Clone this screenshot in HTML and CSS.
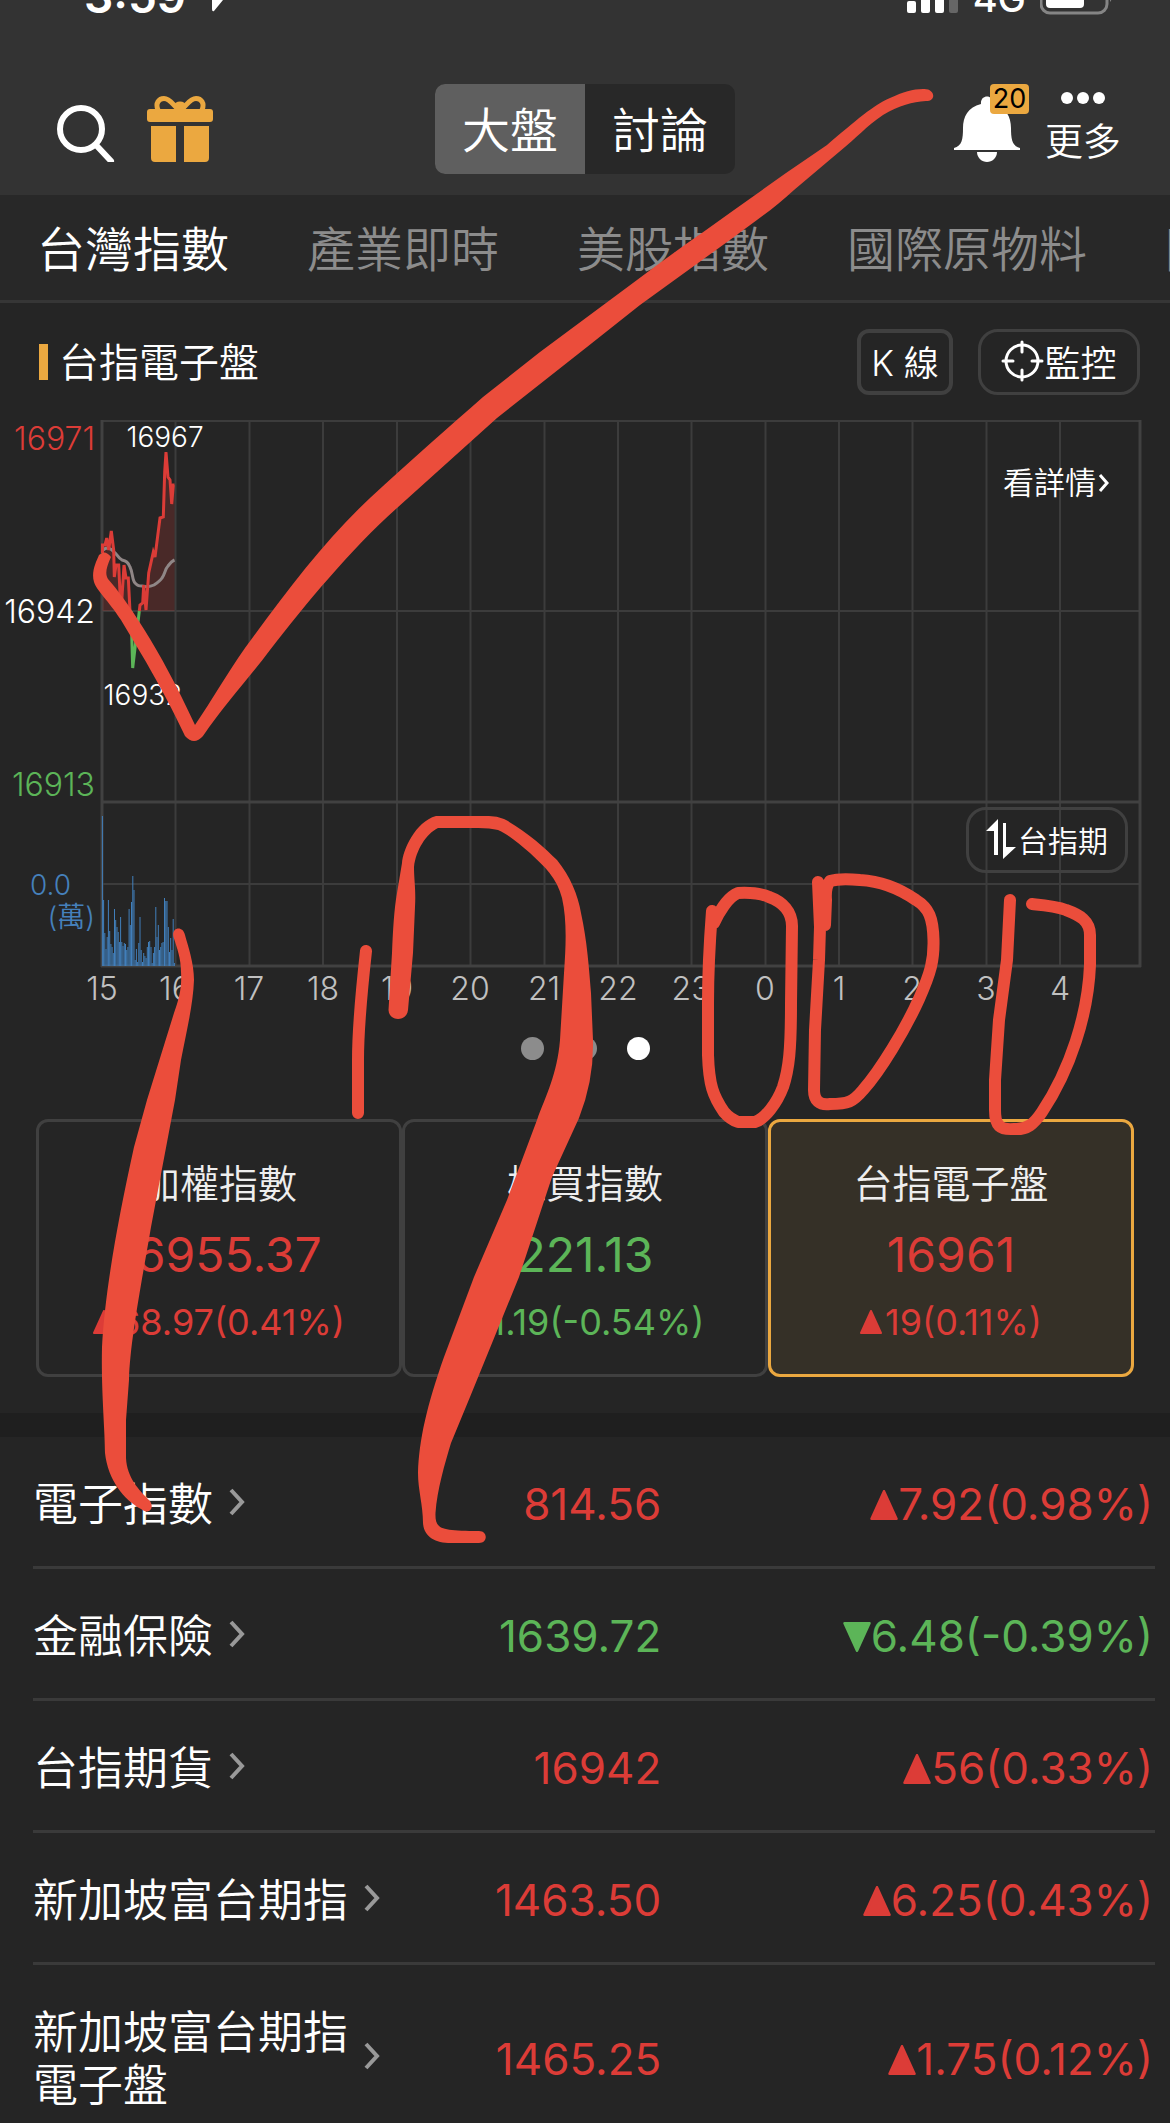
FILE: index.html
```html
<!DOCTYPE html>
<html lang="zh-Hant">
<head>
    <meta charset="UTF-8">
    <meta name="viewport" content="width=device-width, initial-scale=1.0">
    <title>大盤</title>
    <link rel="stylesheet" href="styles.css">
</head>
<body>
    <div class="screen">
        <header class="header">
            <div class="status-bar">
                <div class="status-left">
                    <span class="clock">3:59</span>
                    <svg class="location" width="14" height="19" viewBox="0 0 14 19"><path d="M0 0H13L4 11Q2 12 2 9V0Z" fill="#fff"/></svg>
                </div>
                <div class="status-right">
                    <svg width="52" height="19" viewBox="0 0 52 19" fill="#fff">
                        <rect x="0" y="1" width="9" height="12" rx="2"/>
                        <rect x="14" y="-6" width="9" height="19" rx="2"/>
                        <rect x="28" y="-12" width="9" height="25" rx="2"/>
                        <rect x="42" y="-18" width="9" height="31" rx="2" fill="#666"/>
                    </svg>
                    <span class="network">4G</span>
                    <svg width="74" height="19" viewBox="0 0 74 19">
                        <rect x="1" y="-20" width="66" height="33" rx="9" fill="none" stroke="#858585" stroke-width="3"/>
                        <rect x="6" y="-16" width="38" height="24" rx="4" fill="#fff"/>
                        <path d="M70 -6Q74 -3 70 2Z" fill="#858585"/>
                    </svg>
                </div>
            </div>
            <div class="toolbar">
                <div class="toolbar-left">
                    <button class="icon-button" type="button" aria-label="搜尋">
                        <svg width="58" height="66" viewBox="0 0 58 66" fill="none" stroke="#fff" stroke-width="6" stroke-linecap="round">
                            <ellipse cx="24" cy="33" rx="21" ry="21"/>
                            <path d="M39 49L54 65"/>
                        </svg>
                    </button>
                    <button class="icon-button" type="button" aria-label="禮物">
                        <svg width="66" height="66" viewBox="0 0 66 66" fill="#eba840">
                            <path d="M11 14C8 7 12 2.500 17 2.500C23 2.500 26 9 31 13M55 14C58 7 54 2.500 49 2.500C43 2.500 40 9 35 13" fill="none" stroke="#eba840" stroke-width="5"/>
                            <ellipse cx="33" cy="10" rx="6" ry="4.500"/>
                            <rect x="0" y="13" width="66" height="13" rx="3"/>
                            <path d="M4 30H29V66H8Q4 66 4 62ZM37 30H62V62Q62 66 58 66H37Z"/>
                        </svg>
                    </button>
                </div>
                <div class="segmented">
                    <button class="segment segment-active" type="button">大盤</button>
                    <button class="segment" type="button">討論</button>
                </div>
                <div class="toolbar-right">
                    <button class="icon-button bell" type="button" aria-label="通知">
                        <svg width="66" height="66" viewBox="0 0 66 66" fill="#fff">
                            <path d="M27 8C26 -2 40 -2 39 8C52 11 57 21 57 32C57 43 58 50 66 52V54H0V52C8 50 9 43 9 32C9 21 14 11 27 8Z"/>
                            <path d="M23 56H43C43 62 38 66 33 66C28 66 23 62 23 56Z"/>
                        </svg>
                        <span class="badge">20</span>
                    </button>
                    <button class="more" type="button">
                        <svg width="46" height="14" viewBox="0 0 46 14" fill="#fff"><circle cx="7" cy="6" r="6"/><circle cx="23" cy="6" r="6"/><circle cx="39" cy="6" r="6"/></svg>
                        <span>更多</span>
                    </button>
                </div>
            </div>
        </header>

        <nav class="tabs">
            <a class="tab tab-active" href="#">台灣指數</a>
            <a class="tab" href="#">產業即時</a>
            <a class="tab" href="#">美股指數</a>
            <a class="tab" href="#">國際原物料</a>
            <a class="tab" href="#">國際匯率</a>
        </nav>

        <main>
            <section class="index-panel">
                <div class="panel-head">
                    <h1 class="panel-title"><span>台指電子盤</span></h1>
                    <button class="outline-button k-line" type="button">K 線</button>
                    <button class="outline-button monitor" type="button">
                        <svg width="43" height="42" viewBox="0 0 43 42" fill="none" stroke="#fff" stroke-width="3" stroke-linecap="round">
                            <circle cx="21" cy="21" r="16"/>
                            <path d="M21 2V12M21 30V40M2 21H12M31 21H41"/>
                        </svg>
                        監控
                    </button>
                </div>

                <figure class="chart">
                    <svg class="chart-svg" viewBox="0 395 1170 625">
                        <!-- grid -->
                        <path class="grid" d="M175.500 421V966M249.500 421V966M323 421V966M397 421V966M470.500 421V966M544.500 421V966M618 421V966M691.500 421V966M765.500 421V966M839 421V966M912.500 421V966M986.500 421V966M1060 421V966M102 421H1140M102 611H1140M102 884H1140"/>
                        <path class="frame" d="M102 420V967M1140 420V967M102 802H1140M101 966H1141"/>

                        <!-- volume, one bar per minute -->
                        <path class="volume" d="M102.400 966V816M103.600 966V900M104.800 966V933M106 966V949M107.200 966V937M108.400 966V900M109.700 966V931M110.900 966V944M112.100 966V947M113.300 966V953M114.500 966V909M115.700 966V920M117 966V927M118.200 966V932M119.400 966V942M120.600 966V917M121.800 966V942M123 966V946M124.300 966V943M125.500 966V944M126.700 966V950M127.900 966V947M129.100 966V909M130.300 966V925M131.500 966V902M132.800 966V876M134 966V890M135.200 966V960M136.400 966V949M137.600 966V962M138.800 966V943M140 966V917M141.200 966V950M142.500 966V962M143.700 966V953M144.900 966V956M146.100 966V958M147.300 966V947M148.500 966V942M149.700 966V941M151 966V947M152.200 966V963M153.400 966V953M154.600 966V947M155.800 966V907M157 966V937M158.300 966V925M159.500 966V950M160.700 966V947M161.900 966V943M163.100 966V942M164.500 966V898M165.800 966V901M167 966V901M168.300 966V927M169.500 966V952M170.700 966V938M172 966V950M173.200 966V919M174.400 966V963"/>

                        <!-- price -->
                        <path class="area" d="M102.500 611V545L106.700 538L108.700 550L111.300 531L113.700 550L114.300 577L116 565H118.700L120 593L122 597L124 565L126 578H128.300L130 611ZM139.300 611L140 605L142.700 603L143.700 585L146 610L148.700 573L153.300 552L155 557L160 518L163.300 517L164.700 472L166 452L168 477L170 480L171.700 504L173.300 485H174.500V611Z"/>
                        <path class="average" d="M103 550C108 546 111 549 114 552C117 554 118 558 122 560C126 561 128 562 130 567C133 573 132 580 135 583C138 586 139 586 142 586C146 587 150 587 154 585C157 583 160 581 162 578C165 574 165 569 168 566C171 562 172 561 174.500 560"/>
                        <path class="line-up" d="M102.500 553V545H105L106.700 538L108.700 550L111.300 531L113.700 550L114.300 577L116 565H118.700L120 593L122 597L124 565L126 578H128.300L130 611M139.300 611L140 605L142.700 603L143.700 585L146 610L148.700 573L153.300 552L155 557L160 518L163.300 517L164.700 472L166 452L168 477L170 480L171.700 504L173.300 485H174.500"/>
                        <path class="line-down" d="M131 611L132.700 668L139.300 611"/>

                        <g class="price-labels">
                            <text class="up" x="95" y="450">16971</text>
                            <text x="95" y="623">16942</text>
                            <text class="down" x="95" y="796">16913</text>
                        </g>
                        <g class="volume-labels">
                            <text x="71" y="895">0.0</text>
                            <text x="95" y="927">(萬)</text>
                        </g>
                        <g class="peak-labels">
                            <text x="165" y="447">16967</text>
                            <text x="143" y="705">16932</text>
                        </g>
                        <g class="time-labels">
                            <text x="102" y="1000">15</text>
                            <text x="175" y="1000">16</text>
                            <text x="249" y="1000">17</text>
                            <text x="323" y="1000">18</text>
                            <text x="397" y="1000">19</text>
                            <text x="470" y="1000">20</text>
                            <text x="544" y="1000">21</text>
                            <text x="618" y="1000">22</text>
                            <text x="691" y="1000">23</text>
                            <text x="765" y="1000">0</text>
                            <text x="839" y="1000">1</text>
                            <text x="912" y="1000">2</text>
                            <text x="986" y="1000">3</text>
                            <text x="1060" y="1000">4</text>
                        </g>
                    </svg>
                    <a class="detail-link" href="#">
                        看詳情
                        <svg width="12" height="20" viewBox="0 0 12 20" fill="none" stroke="#fff" stroke-width="3"><path d="M2 2L9 10L2 18"/></svg>
                    </a>
                    <button class="outline-button contract" type="button">
                        <svg width="30" height="40" viewBox="0 0 30 40" fill="#fff"><path d="M12 0V36H8V12H0ZM17 4H20V28H30L17 40Z"/></svg>
                        台指期
                    </button>
                </figure>

                <div class="dots">
                    <button class="dot" type="button" aria-label="1"></button>
                    <button class="dot" type="button" aria-label="2"></button>
                    <button class="dot dot-active" type="button" aria-label="3"></button>
                </div>

                <div class="cards">
                    <button class="card" type="button">
                        <span class="card-name">加權指數</span>
                        <span class="card-price up">16955.37</span>
                        <span class="card-change up"><svg class="arrow" viewBox="0 0 22 24"><path d="M11 1L21 23H1Z"/></svg>68.97(0.41%)</span>
                    </button>
                    <button class="card" type="button">
                        <span class="card-name">櫃買指數</span>
                        <span class="card-price down">221.13</span>
                        <span class="card-change down"><svg class="arrow" viewBox="0 0 22 24"><path d="M11 23L21 1H1Z"/></svg>1.19(-0.54%)</span>
                    </button>
                    <button class="card card-active" type="button">
                        <span class="card-name">台指電子盤</span>
                        <span class="card-price up">16961</span>
                        <span class="card-change up"><svg class="arrow" viewBox="0 0 22 24"><path d="M11 1L21 23H1Z"/></svg>19(0.11%)</span>
                    </button>
                </div>
            </section>

            <section class="quotes">
                <table class="quote-table">
                    <tr>
                        <th class="name" scope="row"><a href="#"><span>電子指數</span><svg class="chevron" viewBox="0 0 16 28"><path d="M2 2L13 14L2 26"/></svg></a></th>
                        <td class="price up">814.56</td>
                        <td class="change up"><svg class="arrow" viewBox="0 0 22 24"><path d="M11 1L21 23H1Z"/></svg>7.92(0.98%)</td>
                    </tr>
                    <tr>
                        <th class="name" scope="row"><a href="#"><span>金融保險</span><svg class="chevron" viewBox="0 0 16 28"><path d="M2 2L13 14L2 26"/></svg></a></th>
                        <td class="price down">1639.72</td>
                        <td class="change down"><svg class="arrow" viewBox="0 0 22 24"><path d="M11 23L21 1H1Z"/></svg>6.48(-0.39%)</td>
                    </tr>
                    <tr>
                        <th class="name" scope="row"><a href="#"><span>台指期貨</span><svg class="chevron" viewBox="0 0 16 28"><path d="M2 2L13 14L2 26"/></svg></a></th>
                        <td class="price up">16942</td>
                        <td class="change up"><svg class="arrow" viewBox="0 0 22 24"><path d="M11 1L21 23H1Z"/></svg>56(0.33%)</td>
                    </tr>
                    <tr>
                        <th class="name" scope="row"><a href="#"><span>新加坡富台期指</span><svg class="chevron" viewBox="0 0 16 28"><path d="M2 2L13 14L2 26"/></svg></a></th>
                        <td class="price up">1463.50</td>
                        <td class="change up"><svg class="arrow" viewBox="0 0 22 24"><path d="M11 1L21 23H1Z"/></svg>6.25(0.43%)</td>
                    </tr>
                    <tr>
                        <th class="name" scope="row"><a href="#"><span>新加坡富台期指電子盤</span><svg class="chevron" viewBox="0 0 16 28"><path d="M2 2L13 14L2 26"/></svg></a></th>
                        <td class="price up">1465.25</td>
                        <td class="change up"><svg class="arrow" viewBox="0 0 22 24"><path d="M11 1L21 23H1Z"/></svg>1.75(0.12%)</td>
                    </tr>
                </table>
            </section>
        </main>

        <!-- marker drawing over the page: a tick and the number 17000 -->
        <svg class="marker" viewBox="0 0 1170 2123" aria-hidden="true">
            <path d="M99 555Q105 549 111 557C106 568 105 574 108 579C125 598 160 648 195 725C212 700 226 675 245 648C285 593 325 540 370 498C410 461 450 426 483 397L540 352L637 280C670 255 702 233 734 210L786 173L827 145C855 121 875 104 890 98C903 92 913 89 923 89C935 88 937 101 926 101C912 102 900 105 883 115C865 127 858 137 839 152L794 190C775 208 755 221 734 237L640 305L587 347L497 418L397 508C350 550 305 605 270 650C250 677 224 705 203 736Q194 746 185 736C160 683 140 652 121 620C108 600 97 591 94 582C91 572 96 562 99 555Z"/>
            <path d="M173.500 937C171 927 183 925 185 935C188 946 194 963 194 980C193 1005 187 1029 181 1060L175 1100L151 1227C143 1275 130 1340 129 1380L126 1420V1458C127 1478 139 1490 150 1501C155 1509 148 1515 141 1509C124 1500 108 1480 105 1453C105 1430 101 1390 102 1347C105 1290 118 1220 134 1147L147 1100L174 1013C179 999 182 988 181 972C181 958 177 948 173.500 937Z"/>
            <path d="M388.500 1010L392 953C393 930 394 910 397 893L402 863C403 850 415 822 436 816H489Q497 816 504 819C525 830 545 848 557 860C570 876 578 895 581 913C587 940 589 968 591 993L593 1040Q594 1080 579 1118L552 1177L519 1277L470 1397L451 1443C445 1463 437 1490 435.500 1513C435 1529 440 1531 479 1531C488 1531 488 1543 479 1543H451C435 1543 424 1537 423 1523C423 1505 418 1490 418 1473C419 1440 427 1405 444 1357L474 1277L507 1200L537 1120C546 1095 557 1075 560 1040L564 973C566 945 567 920 562 898C557 878 545 867 530 853C520 845 511 836 498 830Q490 828 478 828H438C426 834 416 850 414 867C414 880 416 890 415 907L413 953L408 1010C407 1022 389 1022 388.500 1010Z"/>
            <g class="marker-line">
                <path d="M366 951C360 1005 358 1035 358 1060V1113"/>
                <path d="M712 911C709 950 708 975 708 1003V1055C709 1085 713 1096 724 1112Q730 1119 738 1122H755C765 1119 777 1103 783 1087C789 1069 791 1050 791 1003L792 926C792 912 783 902 769 897Q758 892 738 893C728 897 719 912 714 923"/>
                <path d="M818 882L820 927L819 960L815 1030L814 1090Q814 1106 830 1104C848 1104 853 1102 863 1090C880 1071 905 1030 919 999C931 972 934 960 933.500 940C933 918 929 908 916 900C900 889 880 881 860 880Q840 878 830 881Q825 887 826 900L825 925"/>
                <path d="M1010 900L1007 960L999 1020L995 1080V1110C995 1126 1000 1130 1014 1129C1027 1130 1034 1124 1042 1112C1070 1070 1088 1015 1090 965V935C1090 921 1080 915 1066 910C1056 906 1043 905 1032 904"/>
            </g>
        </svg>
    </div>
</body>
</html>
```

FILE: styles.css
```css
* {
    box-sizing: border-box;
}

body {
    font-family: Inter, "Noto Sans CJK TC", sans-serif;
    font-weight: 350;
    background-color: #252525;
    color: #fff;
    margin: 0;
}

button {
    font: inherit;
    color: inherit;
    background: none;
    border: none;
    padding: 0;
    cursor: pointer;
}

a {
    color: inherit;
    text-decoration: none;
}

svg {
    display: block;
    flex-shrink: 0;
}

.screen {
    position: relative;
    height: 100vh;
    overflow: hidden;
}

.up {
    color: #dc3c37;
    fill: #dc3c37;
}

.down {
    color: #5cb558;
    fill: #5cb558;
}

/* header */
.header {
    background-color: #333;
}

.status-bar {
    display: flex;
    justify-content: space-between;
    align-items: flex-end;
    height: 19px;
    padding: 0 56px 0 84px;
    overflow: hidden;
}

.status-left,
.status-right {
    display: flex;
    align-items: flex-end;
}

.status-left {
    gap: 24px;
}

.status-right {
    gap: 14px;
}

.clock {
    font-size: 46px;
    font-weight: 600;
    line-height: 46px;
}

.network {
    font-size: 38px;
    font-weight: 500;
    line-height: 42px;
}

.toolbar {
    display: grid;
    grid-template-columns: 1fr auto 1fr;
    align-items: center;
    height: 176px;
    padding: 44px 49px 0;
}

.toolbar-left {
    display: flex;
    gap: 32px;
    padding-left: 8px;
}

.toolbar-right {
    display: flex;
    align-items: center;
    justify-content: flex-end;
    gap: 25px;
}

.segmented {
    display: flex;
    background-color: #282828;
    border-radius: 10px;
    overflow: hidden;
}

.segment {
    width: 150px;
    height: 90px;
    padding-bottom: 4px;
    font-size: 48px;
}

.segment-active {
    background-color: #5f5f5f;
}

.bell {
    position: relative;
}

.badge {
    position: absolute;
    top: -12px;
    right: -9px;
    width: 39px;
    height: 30px;
    border-radius: 4px;
    background-color: #eba840;
    color: #000;
    font-size: 27px;
    font-weight: 400;
    line-height: 30px;
}

.more {
    display: flex;
    flex-direction: column;
    align-items: center;
    gap: 12px;
    padding-bottom: 2px;
    font-size: 38px;
    line-height: 46px;
}

/* tabs */
.tabs {
    display: flex;
    align-items: center;
    gap: 78px;
    height: 108px;
    padding: 0 0 4px 37px;
    background-color: #282828;
    border-bottom: 3px solid #363636;
    overflow: hidden;
}

.tab {
    flex-shrink: 0;
    font-size: 48px;
    color: #8c8c8c;
}

.tab-active {
    color: #fff;
}

/* index panel */
.index-panel {
    padding: 26px 0 36px;
    border-bottom: 24px solid #1f1f1f;
}

.panel-head {
    display: flex;
    align-items: center;
    padding: 0 30px 0 39px;
}

.panel-title {
    display: flex;
    align-items: center;
    gap: 11px;
    flex: 1;
    margin: 0;
    font-size: 40px;
    font-weight: inherit;
}

.panel-title span {
    padding-bottom: 4px;
}

.panel-title::before {
    content: "";
    width: 9px;
    height: 36px;
    background-color: #eba840;
}

.outline-button {
    display: flex;
    align-items: center;
    justify-content: center;
    height: 66px;
    padding-bottom: 3px;
    border: 3px solid #404040;
    border-radius: 20px;
}

.k-line {
    width: 96px;
    margin-right: 25px;
    border-width: 4px;
    border-radius: 12px;
    font-size: 35px;
}

.monitor {
    width: 162px;
    font-size: 36px;
}

.chart {
    position: relative;
    margin: 0;
}

.chart-svg {
    width: 100%;
}

.grid,
.frame {
    fill: none;
    stroke: #3c3c3c;
    stroke-width: 2;
}

.frame {
    stroke: #414141;
    stroke-width: 3;
}

.volume {
    stroke: #417fbb;
    stroke-width: 1;
}

.area {
    fill: #dc3c37;
    opacity: 0.2;
}

.average,
.line-up,
.line-down {
    fill: none;
    stroke-width: 3;
}

.average {
    stroke: #8f8686;
}

.line-up {
    stroke: #dc3c37;
}

.line-down {
    stroke: #5cb558;
}

.price-labels,
.volume-labels {
    text-anchor: end;
    font-size: 32px;
}

.price-labels text:not(.up):not(.down) {
    fill: #fff;
}

.volume-labels {
    fill: #4580bb;
    font-size: 28px;
}

.peak-labels {
    fill: #fff;
    font-size: 28px;
    text-anchor: middle;
}

.time-labels {
    fill: #c0c0c0;
    font-size: 32px;
    text-anchor: middle;
}

.detail-link {
    position: absolute;
    top: 66px;
    right: 60px;
    display: flex;
    align-items: center;
    gap: 2px;
    font-size: 31px;
    line-height: 44px;
}

.contract {
    position: absolute;
    top: 412px;
    right: 42px;
    width: 162px;
    gap: 2px;
    font-size: 30px;
}

.dots {
    display: flex;
    align-items: center;
    justify-content: center;
    gap: 30px;
    height: 56px;
}

.dot {
    width: 23px;
    height: 23px;
    border-radius: 50%;
    background-color: #8c8c8c;
}

.dot-active {
    background-color: #fff;
}

.cards {
    display: grid;
    grid-template-columns: repeat(3, 1fr);
    padding: 43px 36px 0;
}

.card {
    display: flex;
    flex-direction: column;
    align-items: center;
    gap: 17px;
    padding: 38px 0 32px;
    border: 3px solid #404040;
    border-radius: 12px;
}

.card-active {
    background-color: #353027;
    border-color: #eba840;
}

.card-name {
    font-size: 39px;
    line-height: 48px;
    color: #eee;
}

.card-price {
    font-size: 48px;
    font-weight: 400;
    line-height: 60px;
}

.card-change {
    display: flex;
    align-items: center;
    gap: 3px;
    font-size: 36px;
    font-weight: 400;
    line-height: 40px;
}

.arrow {
    display: inline-block;
    width: 22px;
    height: 24px;
    fill: currentColor;
    stroke: currentColor;
    stroke-width: 2;
    stroke-linejoin: round;
}

/* quote list */
.quotes {
    padding: 0 15px 0 33px;
}

.quote-table {
    width: 100%;
    table-layout: fixed;
    border-collapse: separate;
    border-spacing: 0;
    font-size: 44px;
    line-height: 53px;
}

.quote-table th,
.quote-table td {
    padding: 41px 0 35px;
    border-bottom: 3px solid #3a3a3a;
    font-weight: 400;
    text-align: right;
}

.quote-table .name {
    width: 33%;
    font-size: 45px;
    font-weight: 350;
}

.name a {
    display: flex;
    align-items: center;
    gap: 16px;
}

.name span {
    max-width: 7em;
    text-align: left;
}

.chevron {
    width: 16px;
    height: 28px;
    margin-bottom: 6px;
    fill: none;
    stroke: #999;
    stroke-width: 4;
}

.quote-table .price {
    width: 23%;
}

.quote-table .change {
    padding-right: 2px;
}

.change .arrow {
    width: 28px;
    height: 30px;
}

.marker {
    position: absolute;
    top: 0;
    left: 0;
    width: 100%;
    fill: #eb4d3b;
    pointer-events: none;
}

.marker-line {
    fill: none;
    stroke: #eb4d3b;
    stroke-width: 12;
    stroke-linecap: round;
    stroke-linejoin: round;
}
```
